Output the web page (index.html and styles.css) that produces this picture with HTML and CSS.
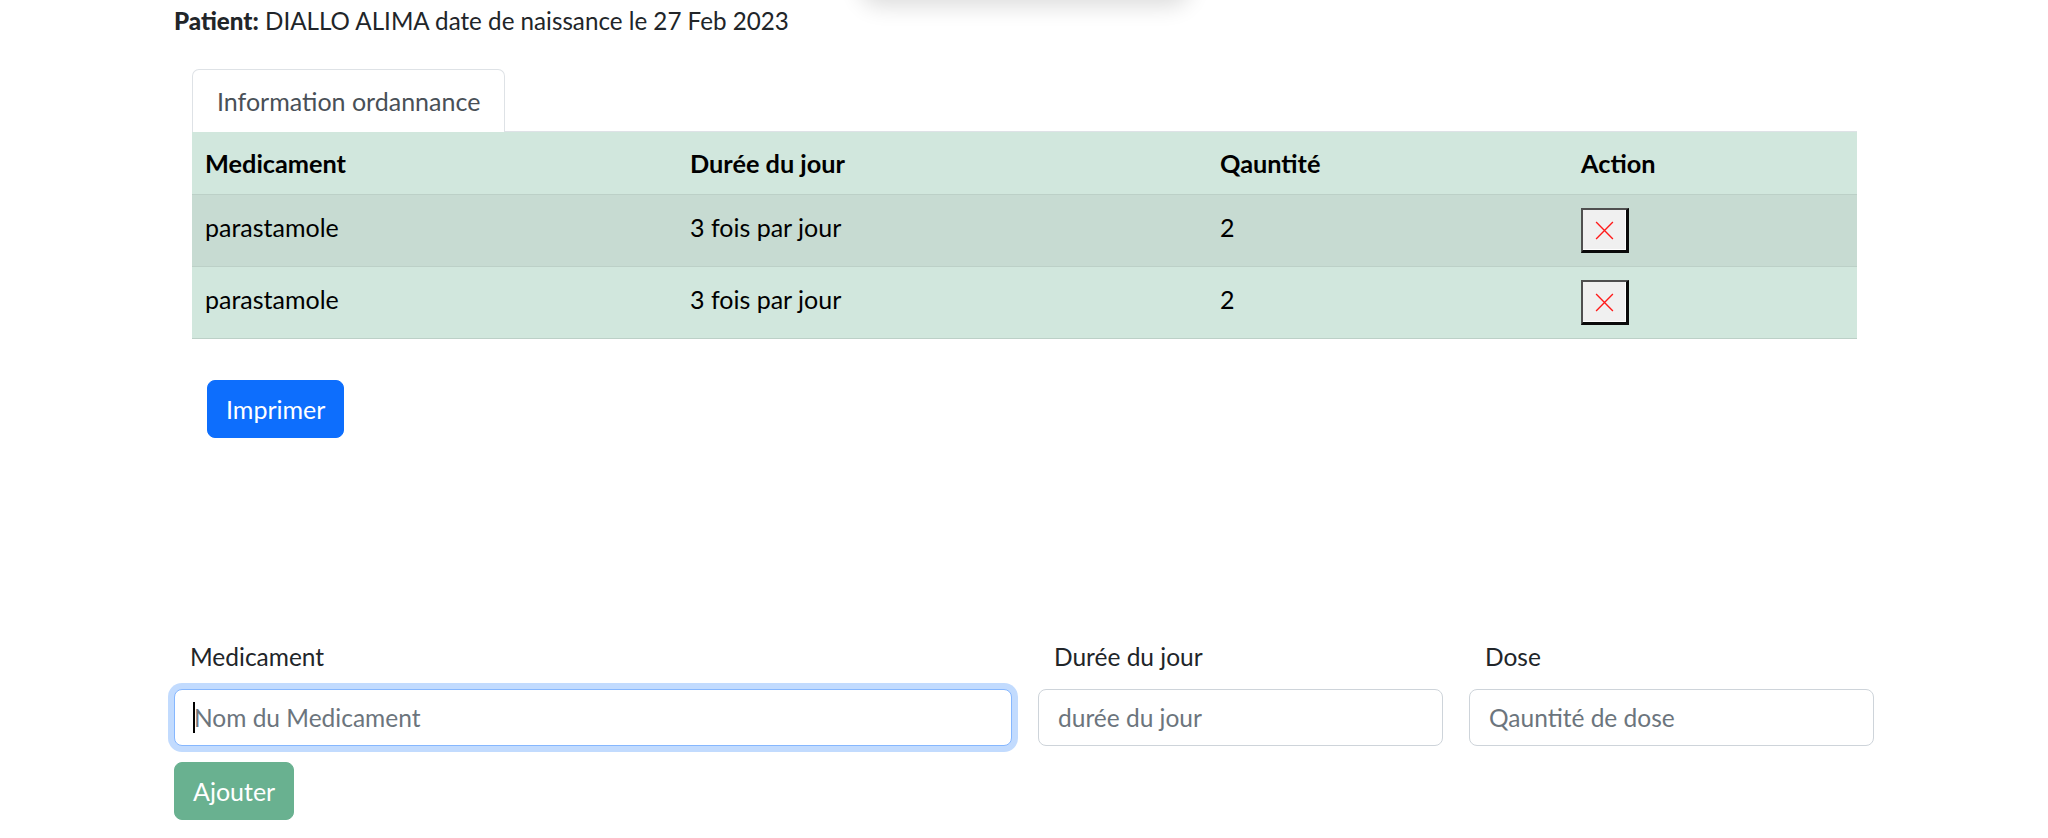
FILE: index.html
```html
<!DOCTYPE html>
<html lang="fr">
<head>
<meta charset="utf-8">
<title>Ordonnance</title>
<link rel="stylesheet" href="styles.css">
</head>
<body>
<div class="top-shadow"></div>
<div class="container">
  <p class="patient"><strong>Patient:</strong> DIALLO ALIMA date de naissance le 27 Feb 2023</p>

  <div class="card-area">
    <ul class="tabs">
      <li class="tab active">Information ordannance</li>
    </ul>
    <table class="table">
      <colgroup>
        <col class="c1"><col class="c2"><col class="c3"><col class="c4">
      </colgroup>
      <thead>
        <tr><th>Medicament</th><th>Durée du jour</th><th>Qauntité</th><th>Action</th></tr>
      </thead>
      <tbody>
        <tr class="striped">
          <td class="txt">parastamole</td><td class="txt">3 fois par jour</td><td class="txt">2</td>
          <td class="act"><button class="del" type="button"><svg viewBox="0 0 20 20" width="21" height="21"><path d="M2 2L18 18M18 2L2 18" stroke="#ff1a1a" stroke-width="1.3" fill="none"/></svg></button></td>
        </tr>
        <tr>
          <td class="txt">parastamole</td><td class="txt">3 fois par jour</td><td class="txt">2</td>
          <td class="act"><button class="del" type="button"><svg viewBox="0 0 20 20" width="21" height="21"><path d="M2 2L18 18M18 2L2 18" stroke="#ff1a1a" stroke-width="1.3" fill="none"/></svg></button></td>
        </tr>
      </tbody>
    </table>
    <div class="actions">
      <button class="btn btn-primary" type="button">Imprimer</button>
    </div>
  </div>

  <form class="form">
    <div class="fields">
      <div class="field">
        <label class="label">Medicament</label>
        <div class="input-wrap">
          <input class="input focus" type="text" placeholder="Nom du Medicament">
          <span class="caret"></span>
        </div>
      </div>
      <div class="field">
        <label class="label">Durée du jour</label>
        <input class="input" type="text" placeholder="durée du jour">
      </div>
      <div class="field">
        <label class="label">Dose</label>
        <input class="input" type="text" placeholder="Qauntité de dose">
      </div>
    </div>
    <button class="btn btn-success" type="button">Ajouter</button>
  </form>
</div>
</body>
</html>
```

FILE: styles.css
```css
html, body {
  margin: 0;
  padding: 0;
  background: #fff;
}
body {
  font-family: Lato, "Noto Sans", sans-serif;
  font-size: 24.5px;
  line-height: 36px;
  color: #212529;
  overflow: hidden;
  position: relative;
  height: 838px;
}
.top-shadow {
  position: absolute;
  top: -70px;
  left: 860px;
  width: 330px;
  height: 70px;
  border-radius: 0 0 20px 20px;
  background: #fff;
  box-shadow: 0 6px 22px rgba(0, 0, 0, 0.14);
}
.container {
  margin-left: 174px;
  width: 1700px;
}
.patient {
  margin: 0;
  padding-top: 3px;
  font-size: 24.2px;
}
.patient strong {
  font-weight: 900;
}
.card-area {
  margin-top: 30px;
  padding: 0 17px 0 18px;
}
.tabs {
  list-style: none;
  margin: 0;
  padding: 0;
  display: flex;
  border-bottom: 1px solid #dee2e6;
}
.tab {
  padding: 13px 24px 13px;
  border: 1px solid #dee2e6;
  border-bottom: none;
  border-radius: 7px 7px 0 0;
  color: #495057;
  background: #fff;
  margin-bottom: -1px;
  font-size: 25px;
}
.table {
  width: 100%;
  border-collapse: collapse;
  background: #d1e7dd;
  color: #000;
}
.c1 { width: 485px; }
.c2 { width: 530px; }
.c3 { width: 361px; }
.table th,
.table td {
  text-align: left;
  padding: 13px 13px;
  border-bottom: 1px solid #bcd0c7;
  vertical-align: middle;
}
.table th {
  font-weight: 700;
  font-size: 25.3px;
}
.table td {
  font-size: 25px;
}
.table td.txt {
  padding-top: 10px;
  padding-bottom: 18px;
}
.table td.act {
  padding-top: 13px;
  padding-bottom: 13px;
}
.table tr.striped td {
  background: #c7dbd2;
}
.del {
  width: 48px;
  height: 45px;
  padding: 0;
  display: flex;
  align-items: center;
  justify-content: center;
  background: #f0f0f0;
  border-style: solid;
  border-width: 2px 3px 3px 2px;
  border-color: #4f4f4f #0a0a0a #0a0a0a #4f4f4f;
  box-shadow: inset -1px -1px 0 #fff;
}
.del svg {
  display: block;
}
.actions {
  padding: 41px 0 0 15px;
}
.btn {
  font-family: inherit;
  font-size: 25px;
  line-height: 36px;
  padding: 10px 18px;
  border: 1px solid transparent;
  border-radius: 8px;
  color: #fff;
  cursor: pointer;
}
.btn-primary {
  background: #0d6efd;
  border-color: #0d6efd;
}
.btn-success {
  background: #69b190;
  border-color: #69b190;
}
.form {
  margin-top: 203px;
}
.fields {
  display: grid;
  grid-template-columns: 838px 405px 405px;
  column-gap: 26px;
  margin-bottom: 16px;
}
.field {
  display: flex;
  flex-direction: column;
}
.label {
  padding-left: 16px;
  margin-bottom: 14px;
  margin-top: -2px;
  color: #212529;
}
.input-wrap {
  position: relative;
}
.input {
  box-sizing: border-box;
  width: 100%;
  height: 57px;
  padding: 9px 19px;
  font-family: inherit;
  font-size: 24.5px;
  color: #212529;
  background: #fff;
  border: 1px solid #ced4da;
  border-radius: 8px;
  outline: none;
}
.input::placeholder {
  color: #6c757d;
}
.input.focus {
  border-color: #86b7fe;
  box-shadow: 0 0 0 6px rgba(13, 110, 253, 0.25);
}
.caret {
  position: absolute;
  left: 19px;
  top: 13px;
  width: 2px;
  height: 31px;
  background: #000;
}
```
